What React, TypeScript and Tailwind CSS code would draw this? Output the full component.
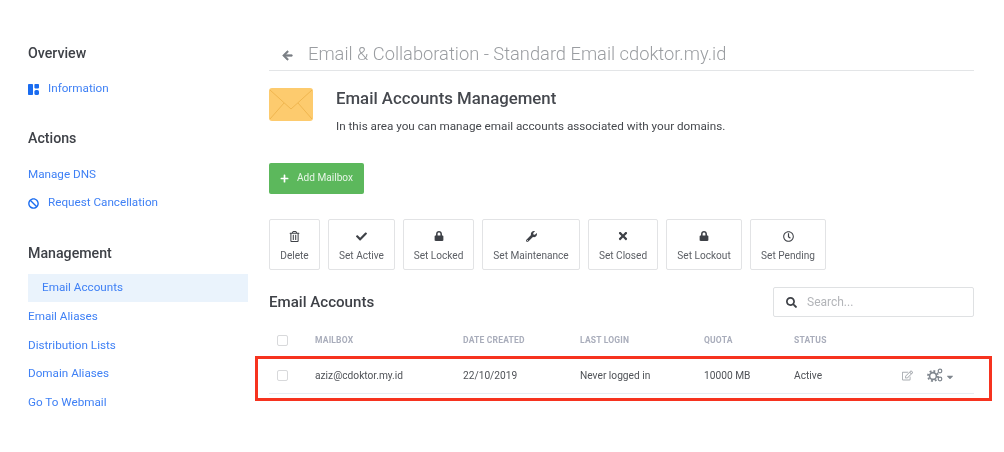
import { FaArrowLeft, FaBan, FaCheck, FaLock, FaPlus, FaRegClock, FaRegEdit, FaRegTrashAlt, FaSearch, FaTimes, FaWrench, FaCaretDown } from "react-icons/fa";
import type { ReactNode } from "react";

const actions: { label: string; icon: ReactNode; width: string }[] = [
  { label: "Delete", icon: <FaRegTrashAlt size={11} />, width: "w-[51px]" },
  { label: "Set Active", icon: <FaCheck size={11} />, width: "w-[67px]" },
  { label: "Set Locked", icon: <FaLock size={10} />, width: "w-[71px]" },
  { label: "Set Maintenance", icon: <FaWrench size={11} />, width: "w-[98px]" },
  { label: "Set Closed", icon: <FaTimes size={12} />, width: "w-[70px]" },
  { label: "Set Lockout", icon: <FaLock size={10} />, width: "w-[76px]" },
  { label: "Set Pending", icon: <FaRegClock size={11} />, width: "w-[76px]" },
];

function InfoIcon() {
  return (
    <svg width="11" height="11" viewBox="0 0 11 11" fill="#1a6cf0">
      <rect x="0" y="0" width="5" height="11" rx="0.8" />
      <rect x="6.4" y="0" width="4.6" height="4.4" rx="0.8" />
      <rect x="6.4" y="6" width="4.6" height="5" rx="1.6" />
    </svg>
  );
}

function Envelope() {
  return (
    <svg width="44" height="33" viewBox="0 0 44 33">
      <rect x="0" y="0" width="44" height="33" rx="3" fill="#fdcb6e" />
      <path d="M1 2 L22 21 L43 2" fill="none" stroke="#f0b64f" strokeWidth="1" />
      <path d="M1 31 L15 15 M43 31 L29 15" fill="none" stroke="#f0b64f" strokeWidth="1" />
    </svg>
  );
}

function Cogs() {
  return (
    <svg width="16" height="14" viewBox="0 0 16 14" fill="none" stroke="#7f868e">
      <circle cx="6" cy="8" r="3.4" strokeWidth="1.6" />
      <circle cx="6" cy="8" r="5" strokeWidth="1.8" strokeDasharray="1.9 2" />
      <circle cx="13" cy="3" r="1.8" strokeWidth="1.2" />
      <circle cx="13" cy="11" r="1.8" strokeWidth="1.2" />
    </svg>
  );
}

function Checkbox() {
  return <div className="h-[11px] w-[11px] rounded-[2px] border border-[#d8d9db]" />;
}

function SideLink({ icon, children }: { icon?: ReactNode; children: ReactNode }) {
  return (
    <a className="flex h-[28.5px] items-center pt-[2px] text-[11.7px] text-[#3f80f5]">
      {icon && <span className="flex w-[20px] items-center text-[#1a6cf0]">{icon}</span>}
      {children}
    </a>
  );
}

function SideHeading({ children }: { children: ReactNode }) {
  return <h3 className="text-[14.2px] font-medium leading-[20px] text-[#3e4147]">{children}</h3>;
}

export default function App() {
  return (
    <div className="relative flex h-[452px] w-[1004px] overflow-hidden bg-white font-['Roboto',sans-serif] blur-[0.3px]">
      <aside className="ml-[28px] w-[220px] shrink-0 pt-[43px]">
        <SideHeading>Overview</SideHeading>
        <div className="mt-[11px]">
          <SideLink icon={<InfoIcon />}>Information</SideLink>
        </div>
        <div className="mt-[25px]">
          <SideHeading>Actions</SideHeading>
        </div>
        <div className="mt-[12px]">
          <SideLink>Manage DNS</SideLink>
          <SideLink icon={<FaBan size={11} />}>Request Cancellation</SideLink>
        </div>
        <div className="mt-[26px]">
          <SideHeading>Management</SideHeading>
        </div>
        <div className="mt-[11px]">
          <div className="flex h-[28.5px] items-center bg-[#eaf3fc] pl-[14px] text-[11.7px] text-[#3f80f5]">Email Accounts</div>
          <SideLink>Email Aliases</SideLink>
          <SideLink>Distribution Lists</SideLink>
          <SideLink>Domain Aliases</SideLink>
          <SideLink>Go To Webmail</SideLink>
        </div>
      </aside>

      <main className="ml-[21px] w-[705px] shrink-0 pt-[41px]">
        <div className="flex h-[30px] items-center border-b border-[#e3e5e7] pb-[3px] pl-[13px]">
          <FaArrowLeft size={11} className="mt-[2px] stroke-current stroke-[30px] text-[#7b7f85]" />
          <span className="ml-[15px] text-[18.3px] font-light text-[#9a9da1]">Email &amp; Collaboration - Standard Email cdoktor.my.id</span>
        </div>

        <div className="mt-[17px] flex">
          <Envelope />
          <div className="ml-[23px]">
            <h1 className="text-[16.8px] font-medium leading-[20px] text-[#45484e]">Email Accounts Management</h1>
            <p className="mt-[10px] text-[11.7px] leading-[16px] text-[#44474c]">In this area you can manage email accounts associated with your domains.</p>
          </div>
        </div>

        <button className="mt-[29px] flex h-[31px] w-[95px] items-center rounded-[2px] bg-[#5cb85c] pl-[11px] text-[10.1px] text-[#e6f5e6]">
          <FaPlus size={9} className="text-white" />
          <span className="ml-[8px] pb-[2px]">Add Mailbox</span>
        </button>

        <div className="mt-[25px] flex gap-[8px]">
          {actions.map((a) => (
            <button
              key={a.label}
              className={`flex h-[51px] flex-col items-center rounded-[2px] border border-[#e2e3e5] pt-[10px] text-[10.1px] text-[#5d6066] ${a.width}`}
            >
              <span className="flex h-[12px] items-center text-[#3e4147]">{a.icon}</span>
              <span className="mt-[7px] leading-[14px]">{a.label}</span>
            </button>
          ))}
        </div>

        <div className="mt-[17px] flex items-center justify-between">
          <h2 className="text-[15.1px] font-medium text-[#3e4147]">Email Accounts</h2>
          <div className="flex h-[30px] w-[201px] items-center rounded-[2px] border border-[#dfe1e3] pl-[12px]">
            <FaSearch size={11} className="text-[#3e4147]" />
            <span className="ml-[10px] text-[12px] text-[#b3b5b9]">Search...</span>
          </div>
        </div>

        <table className="mt-[7px] w-full table-fixed text-left">
          <thead>
            <tr className="h-[32px] text-[8.5px] font-bold tracking-[0.2px] text-[#a9adbb]">
              <th className="w-[46px] pl-[8px]"><Checkbox /></th>
              <th className="w-[148px] font-bold">MAILBOX</th>
              <th className="w-[117px] font-bold">DATE CREATED</th>
              <th className="w-[124px] font-bold">LAST LOGIN</th>
              <th className="w-[90px] font-bold">QUOTA</th>
              <th className="w-[108px] font-bold">STATUS</th>
              <th />
            </tr>
          </thead>
          <tbody>
            <tr className="h-[37px] border-b border-[#e6edf3] text-[10.2px] text-[#4f5257] [&>td]:pt-[2px]">
              <td className="pl-[8px]"><Checkbox /></td>
              <td>aziz@cdoktor.my.id</td>
              <td>22/10/2019</td>
              <td>Never logged in</td>
              <td>10000 MB</td>
              <td>Active</td>
              <td>
                <div className="flex items-center">
                  <FaRegEdit size={11} className="text-[#a9adb2]" />
                  <span className="ml-[14px]"><Cogs /></span>
                  <FaCaretDown size={10} className="ml-[2px] mt-[3px] text-[#7f868e]" />
                </div>
              </td>
            </tr>
          </tbody>
        </table>
      </main>

      {/* red annotation around the mailbox row */}
      <div className="pointer-events-none absolute left-[255px] top-[356px] h-[45px] w-[737px] border-[3px] border-[#f6331f]" />
    </div>
  );
}
